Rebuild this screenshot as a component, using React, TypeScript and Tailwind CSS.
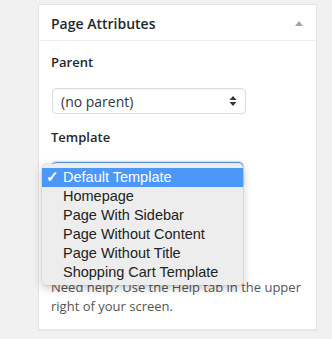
const templates = [
  "Default Template",
  "Homepage",
  "Page With Sidebar",
  "Page Without Content",
  "Page Without Title",
  "Shopping Cart Template",
];

const SelectArrows = () => (
  <svg width="8" height="12" viewBox="0 0 8 12" className="text-[#32373c]">
    <path d="M4 1 L7.5 5 H0.5 Z" fill="currentColor" />
    <path d="M4 11 L7.5 7 H0.5 Z" fill="currentColor" />
  </svg>
);

const PageAttributesBox = () => {
  return (
    <div className="relative w-[279px] bg-white border border-[#e5e5e5] shadow-[0_1px_1px_rgba(0,0,0,0.04)]">
      {/* header */}
      <div className="flex items-center justify-between h-[36px] pl-[12px] pr-[13px] pt-[2px] border-b border-[#eee]">
        <h2 className="text-[14px] font-semibold text-[#23282d]">Page Attributes</h2>
        <svg width="8" height="5" viewBox="0 0 8 5">
          <path d="M4 0 L8 5 H0 Z" fill="#a0a5aa" />
        </svg>
      </div>

      <div className="px-[12px] pt-[12px] pb-[13px] text-[13px] text-[#444]">
        <p className="font-semibold leading-[19px] text-[#23282d]">Parent</p>
        <div className="mt-[16px] ml-[1px] flex items-center justify-between w-[194px] h-[26px] pl-[8px] pr-[8px] border border-[#ddd] rounded-[4px] shadow-[inset_0_1px_2px_rgba(0,0,0,0.05)] text-[14px] text-[#32373c]">
          <span>(no parent)</span>
          <SelectArrows />
        </div>

        <p className="mt-[14px] font-semibold leading-[19px] text-[#23282d]">Template</p>
        <div className="mt-[15px] ml-[1px] w-[191px] h-[26px] border border-[#5b9dd9] rounded-[4px] shadow-[0_0_2px_rgba(30,140,190,0.8)]" />

        <p className="mt-[14px] font-semibold leading-[19px] text-[#23282d]">Order</p>
        <div className="mt-[16px] ml-[1px] w-[60px] h-[28px] border border-[#ddd]" />

        <p className="mt-[13px] leading-[19px] text-[#555]">
          Need help? Use the Help tab in the upper right of your screen.
        </p>
      </div>

      {/* open native dropdown menu */}
      <div className="absolute left-[3px] top-[159px] w-[201px] pt-[4px] pb-[3px] bg-[#ededed] rounded-[4px] shadow-[0_3px_10px_rgba(0,0,0,0.22),0_0_0_0.5px_rgba(0,0,0,0.12)] font-['Liberation_Sans',Arial,sans-serif] text-[14.5px] text-[#222]">
        {templates.map((t, i) => (
          <div
            key={t}
            className={
              i === 0
                ? "flex items-center h-[19px] bg-[#4b97fa] text-white"
                : "flex items-center h-[19px]"
            }
          >
            <span className="w-[21px] pl-[4px] text-[15px] font-bold">{i === 0 ? "✓" : ""}</span>
            <span>{t}</span>
          </div>
        ))}
      </div>
    </div>
  );
};

export default function App() {
  return (
    <div className="h-[339px] w-[332px] bg-[#f1f1f1] pt-[4px] pl-[38px] font-['Open_Sans',sans-serif]">
      <PageAttributesBox />
    </div>
  );
}
